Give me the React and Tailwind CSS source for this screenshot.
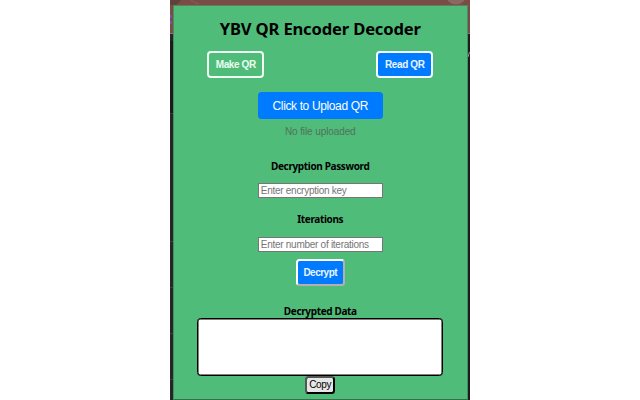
const label = "text-center font-['Noto_Sans',sans-serif] text-[10px] font-bold leading-[14px] tracking-[-0.36px] text-black whitespace-nowrap";
const field = "block h-[15px] w-[125px] border border-[#767676] bg-white px-[2px] py-0 text-[10px] tracking-[-0.27px] leading-[13px] text-black outline-none placeholder:text-[#757575] placeholder:opacity-100";

export default function App() {
  return (
    <div className="flex h-[400px] w-[640px] justify-center overflow-hidden bg-white font-['Liberation_Sans',sans-serif]">
      <div className="relative flex h-[400px] w-[300px] flex-col overflow-hidden bg-[#25252b]">
        {/* browser chrome behind the popup */}
        <svg className="absolute inset-0" width="300" height="400" viewBox="0 0 300 400">
          <rect width="300" height="34" fill="#7b4b45" />
          <path d="M0 0H11Q8 5 3 5H0Z" fill="#60413d" />
          <path d="M21 0Q24 3 29 4" stroke="#94655e" fill="none" strokeWidth="0.7" />
          <circle cx="286" cy="-6" r="10.5" fill="#8d6862" />
          <rect y="33" width="300" height="1" fill="#98716a" />
          <path d="M0 16.5H1.5M0 22.5H1.5" stroke="#7650df" strokeWidth="3" />
          <rect y="41" width="3" height="72" fill="#1b1b20" />
          <rect x="297" y="34" width="3" height="366" fill="#1c1b20" />
          <path d="M298 57L299.5 52" stroke="#b8b6bb" strokeWidth="0.8" />
          <path d="M0 113.5H3M0 241.5H3M0 287.5H3M0 333.5H3M0 379.5H3" stroke="#3c3c43" />
        </svg>
        <main className="relative mx-[3px] mt-[5px] flex h-[395px] w-[294.5px] flex-col items-center border border-[#458f60] border-t-[#5b8355] border-b-[#35704a] bg-[#50bc7a]">
          <h1 className="mt-[11px] whitespace-nowrap font-['Noto_Sans',sans-serif] text-[16.6px] font-bold leading-[23px] tracking-[-0.17px] text-black">
            YBV QR Encoder Decoder
          </h1>
          <div className="mt-[11px] flex w-[226px] justify-between">
            <button className="h-[27px] w-[57px] whitespace-nowrap rounded-[4px] border-2 border-[#effff4] text-[10px] font-bold tracking-[-0.4px] text-[#e9fff0]">Make QR</button>
            <button className="h-[27px] w-[57px] whitespace-nowrap rounded-[4px] border-2 border-[#f4faff] bg-[#007bff] text-[10px] font-bold tracking-[-0.4px] text-[#e9f5ff]">Read QR</button>
          </div>
          <button className="mt-[14px] h-[27px] w-[124.5px] whitespace-nowrap rounded-[3.5px] bg-[#007bff] text-[12px] tracking-[-0.37px] leading-[26px] text-white">Click to Upload QR</button>
          <p className="mt-[6px] whitespace-nowrap text-[10px] tracking-[-0.1px] leading-[14px] text-[#50705b]">No file uploaded</p>
          <h2 className={label + " mt-[20px]"}>Decryption Password</h2>
          <input className={field + " mt-[10px]"} placeholder="Enter encryption key" />
          <h2 className={label + " mt-[14px]"}>Iterations</h2>
          <input className={field + " mt-[11px]"} placeholder="Enter number of iterations" />
          <button className="mt-[7px] h-[27px] w-[49px] rounded-[3.5px] border-2 border-t-white border-r-[#b4b0b0] border-b-[#b4b0b0] border-l-white bg-[#007bff] text-[10px] tracking-[-0.5px] font-bold text-[#e9f5ff]">Decrypt</button>
          <h2 className={label + " mt-[18px]"}>Decrypted Data</h2>
          <textarea className="block h-[58px] w-[246px] shrink-0 resize-none rounded-[3.5px] border border-black bg-white shadow-[inset_0_0_0_0.5px_#000] outline-none" />
          <button className="h-[18px] w-[30px] shrink-0 rounded-[3.5px] border-2 border-t-[#555] border-r-black border-b-black border-l-[#555] bg-[#e7e7e7] text-[10px] tracking-[-0.3px] leading-[14px] text-black">Copy</button>
        </main>
      </div>
    </div>
  );
}
